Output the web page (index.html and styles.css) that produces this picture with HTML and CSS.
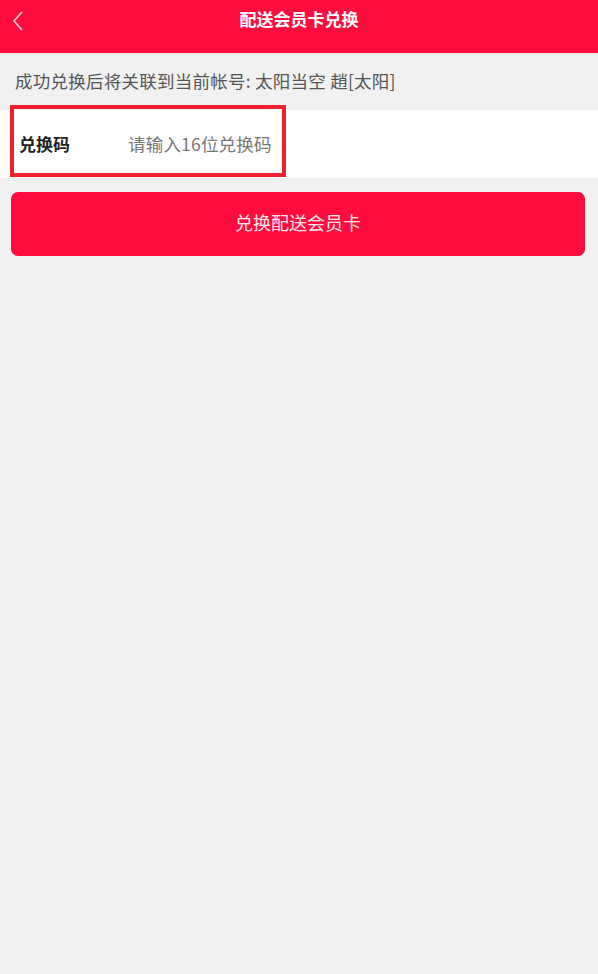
FILE: index.html
```html
<!DOCTYPE html>
<html lang="zh-CN">
<head>
<meta charset="utf-8">
<title>配送会员卡兑换</title>
<link rel="stylesheet" href="styles.css">
</head>
<body>
<div class="page">
  <header class="topbar">
    <span class="back">
      <svg width="12" height="20" viewBox="0 0 12 20"><path d="M9.5 1.5 L2 10 L9.5 18.5" fill="none" stroke="#fff" stroke-width="1.8" stroke-linecap="round" stroke-linejoin="round" opacity="0.8"/></svg>
    </span>
    <h1 class="title">配送会员卡兑换</h1>
  </header>
  <p class="notice">成功兑换后将关联到当前帐号: 太阳当空 趙[太阳]</p>
  <div class="field">
    <span class="label">兑换码</span>
    <span class="placeholder">请输入16位兑换码</span>
    <span class="highlight"></span>
  </div>
  <div class="actions">
    <button class="submit">兑换配送会员卡</button>
  </div>
</div>
</body>
</html>
```
FILE: styles.css
```css
* { box-sizing: border-box; }
html, body { margin: 0; padding: 0; }
body {
  background: #f1f1f1;
  font-family: "Noto Sans CJK SC", "Noto Sans", sans-serif;
  width: 598px;
  height: 974px;
}
.page { display: flex; flex-direction: column; }
.topbar {
  height: 53px;
  background: #ff0c3e;
  display: flex;
  align-items: center;
  justify-content: center;
  position: relative;
}
.back {
  position: absolute;
  left: 12px;
  top: 11px;
  display: flex;
}
.title {
  margin: 0 0 16px;
  font-size: 17px;
  font-weight: bold;
  color: #fff;
  line-height: 20px;
}
.notice {
  margin: 0;
  height: 57px;
  padding: 17px 0 0 15px;
  font-size: 17.5px;
  letter-spacing: 0.25px;
  line-height: 22px;
  color: #555;
}
.field {
  position: relative;
  height: 68px;
  background: #fff;
  display: flex;
  align-items: center;
  padding-left: 19px;
  font-size: 17px;
}
.label {
  font-weight: bold;
  color: #222;
  width: 109px;
  margin-top: -2px;
}
.placeholder { color: #777; margin-top: -2px; font-size: 17.5px; letter-spacing: 0.2px; }
.highlight {
  position: absolute;
  left: 10px;
  top: -5px;
  width: 276px;
  height: 72px;
  border: 4px solid #f0202e;
}
.actions { padding: 14px 13px 0 11px; }
.submit {
  width: 100%;
  height: 64px;
  border: 0;
  border-radius: 7px;
  background: #ff0c3e;
  color: #fde4e8;
  font-family: inherit;
  font-size: 18px;
  padding: 0 0 4px;
}
```
